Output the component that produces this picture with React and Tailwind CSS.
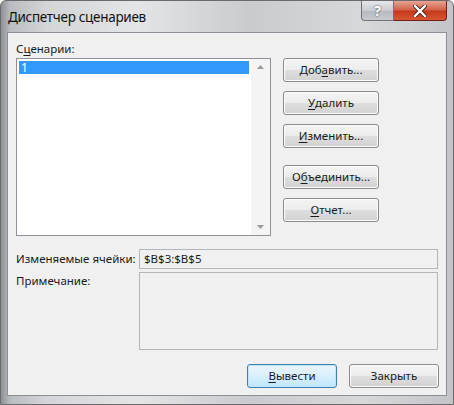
import React from 'react'

const FONT = { fontFamily: '"Noto Sans", "Open Sans", sans-serif' }

function U({ children }) {
  return <span className="underline underline-offset-2">{children}</span>
}

function Button({ children, className = '', focused = false }) {
  return (
    <div
      className={`flex h-[24px] items-center justify-center whitespace-nowrap rounded-[3px] border text-[11.5px] text-[#1a1a1a] ${
        focused
          ? 'border-[#3c7fb1] bg-gradient-to-b from-[#eaf6fd] via-[#d9f0fc] to-[#bee6fd] shadow-[inset_0_0_0_1px_#c4e5f6]'
          : 'border-[#8a8a8a] bg-[linear-gradient(#f4f4f4_0%,#ececec_50%,#dedede_51%,#d2d2d2_100%)] shadow-[inset_0_0_0_1px_#fcfcfc]'
      } ${className}`}
    >
      {children}
    </div>
  )
}

export default function App() {
  return (
    <div style={FONT} className="h-[405px] w-[454px] bg-white">
      <div className="flex h-[405px] w-[454px] flex-col rounded-t-[6px] border border-[#6b6b6b] bg-[linear-gradient(90deg,#8e9196_0%,#b9bcc0_2%,#d3d5d8_10%,#e4e5e7_30%,#c9cbce_55%,#d7d8da_80%,#c2c4c7_100%)]">
        {/* title bar */}
        <div className="flex h-[31px] shrink-0 items-start">
          <div className="whitespace-nowrap pl-[7px] pt-[7px] text-[13.5px] leading-[18px] tracking-[-0.3px] text-[#111]">Диспетчер сценариев</div>
          <div className="ml-auto mr-[6px] flex h-[20px]">
            <div className="flex w-[33px] items-center justify-center rounded-bl-[4px] border border-t-0 border-[#6f7378] bg-[linear-gradient(#e5e7ea_0%,#c9ccd0_50%,#b5b9be_51%,#c7cacf_100%)] text-[14px] font-bold leading-none text-white [text-shadow:0_0_2px_#333]">
              ?
            </div>
            <div className="flex w-[53px] items-center justify-center rounded-br-[4px] border border-l-0 border-t-0 border-[#6e2018] bg-[linear-gradient(#e8a493_0%,#d4644c_45%,#c53a1f_55%,#d9552f_100%)]">
              <svg width="14" height="12" viewBox="0 0 14 12">
                <path d="M2 1 L12 11 M12 1 L2 11" stroke="#3a1a14" strokeWidth="4" strokeLinecap="square" />
                <path d="M2 1 L12 11 M12 1 L2 11" stroke="#ffffff" strokeWidth="2.4" strokeLinecap="square" />
              </svg>
            </div>
          </div>
        </div>

        {/* client area */}
        <div className="mx-[6px] h-[364px] border border-[#8d9096] bg-[#f0f0f0] text-[11.5px] text-[#1a1a1a]">
          <div className="pl-[8px] pt-[8px] leading-[16px]">
            С<U>ц</U>енарии:
          </div>
          <div className="mt-[1px] flex items-start">
            {/* list box */}
            <div className="ml-[8px] flex h-[178px] w-[255px] border border-[#8e9298] bg-white">
              <div className="flex-1 p-[2px]">
                <div className="h-[13px] bg-[#3399ff] pl-[2px] text-[12px] leading-[13px] text-white">1</div>
              </div>
              <div className="flex w-[19px] flex-col items-center justify-between bg-[#f4f4f4] py-[6px]">
                <svg width="7" height="4" viewBox="0 0 7 4"><path d="M0 4 L3.5 0 L7 4 Z" fill="#9a9a9a" /></svg>
                <svg width="7" height="4" viewBox="0 0 7 4"><path d="M0 0 L3.5 4 L7 0 Z" fill="#9a9a9a" /></svg>
              </div>
            </div>

            {/* buttons column */}
            <div className="ml-[12px] flex w-[96px] flex-col">
              <Button>Доб<U>а</U>вить...</Button>
              <Button className="mt-[9px]"><U>У</U>далить</Button>
              <Button className="mt-[9px]"><U>И</U>зменить...</Button>
              <Button className="mt-[17px]">О<U>б</U>ъединить...</Button>
              <Button className="mt-[9px]"><U>О</U>тчет...</Button>
            </div>
          </div>

          <div className="mt-[13px] flex items-center">
            <div className="w-[131px] whitespace-nowrap pl-[8px]">Изменяемые ячейки:</div>
            <div className="h-[20px] w-[299px] border border-[#b4b6ba] bg-[#f0f0f0] pl-[4px] leading-[18px]">$B$3:$B$5</div>
          </div>
          <div className="mt-[3px] flex">
            <div className="w-[131px] whitespace-nowrap pl-[8px] pt-[1px] leading-[16px]">Примечание:</div>
            <div className="h-[78px] w-[299px] border border-[#b4b6ba] bg-[#f0f0f0]" />
          </div>

          <div className="mt-[14px] flex justify-end pr-[7px]">
            <Button focused className="w-[90px]"><U>В</U>ывести</Button>
            <Button className="ml-[12px] w-[90px]">Закрыть</Button>
          </div>
        </div>
      </div>
    </div>
  )
}
